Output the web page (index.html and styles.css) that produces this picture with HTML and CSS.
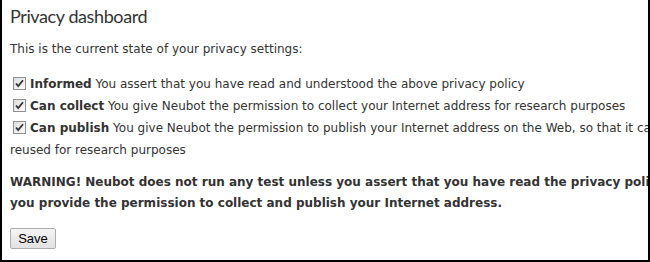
FILE: index.html
```html
<!DOCTYPE html>
<html>
<head>
<meta charset="utf-8">
<title>Privacy dashboard</title>
<link rel="stylesheet" href="styles.css">
</head>
<body>
<div class="frame">
  <div class="content">
    <h1 class="title">Privacy dashboard</h1>
    <p class="intro">This is the current state of your privacy settings:</p>
    <p class="settings">
      <span class="cb"><svg width="13" height="13" viewBox="0 0 13 13"><defs><linearGradient id="g" x1="0" y1="0" x2="1" y2="1"><stop offset="0" stop-color="#dcdcdc"/><stop offset="1" stop-color="#ffffff"/></linearGradient></defs><rect x="0.5" y="0.5" width="12" height="12" fill="url(#g)" stroke="#8e8f8f"/><path d="M3 6.5 L5.2 9 L10 3.2" fill="none" stroke="#333" stroke-width="1.8"/></svg></span><b>Informed</b> You assert that you have read and understood the above privacy policy<br>
      <span class="cb"><svg width="13" height="13" viewBox="0 0 13 13"><rect x="0.5" y="0.5" width="12" height="12" fill="url(#g)" stroke="#8e8f8f"/><path d="M3 6.5 L5.2 9 L10 3.2" fill="none" stroke="#333" stroke-width="1.8"/></svg></span><b>Can collect</b> You give Neubot the permission to collect your Internet address for research purposes<br>
      <span class="cb"><svg width="13" height="13" viewBox="0 0 13 13"><rect x="0.5" y="0.5" width="12" height="12" fill="url(#g)" stroke="#8e8f8f"/><path d="M3 6.5 L5.2 9 L10 3.2" fill="none" stroke="#333" stroke-width="1.8"/></svg></span><b>Can publish</b> You give Neubot the permission to publish your Internet address on the Web, so that it can be reused for research purposes
    </p>
    <p class="warning">WARNING! Neubot does not run any test unless you assert that you have read the privacy policy and you provide the permission to collect and publish your Internet address.</p>
    <button class="save" type="button">Save</button>
  </div>
</div>
</body>
</html>
```
FILE: styles.css
```css
html, body {
  margin: 0;
  padding: 0;
  background: #fff;
}
.frame {
  box-sizing: border-box;
  width: 650px;
  height: 262px;
  overflow: hidden;
  border-left: 2px solid #000;
  border-right: 2px solid #000;
  border-bottom: 2px solid #000;
}
.content {
  width: 700px;
  padding: 0 8px;
  color: #333;
  font-family: "DejaVu Sans", Verdana, sans-serif;
  font-size: 12px;
}
.title {
  font-family: Lato, "Open Sans", sans-serif;
  font-weight: 400;
  font-size: 18px;
  letter-spacing: -0.4px;
  line-height: 26px;
  margin: 3px 0 9px;
  color: #333;
}
.intro {
  line-height: 22px;
  margin: 0 0 13px;
}
.settings {
  line-height: 22px;
  margin: 0 0 11px;
}
.cb {
  display: inline-block;
  width: 13px;
  height: 13px;
  margin: 0 4px 0 3px;
  vertical-align: -2px;
}
.cb svg {
  display: block;
}
.warning {
  font-weight: bold;
  line-height: 21px;
  margin: 0 0 14px;
}
.save {
  font-family: "Liberation Sans", Arial, sans-serif;
  font-size: 13px;
  color: #000;
  width: 46px;
  height: 21px;
  padding: 0;
  border: 1px solid #adadad;
  border-radius: 2px;
  background: linear-gradient(#f4f4f4, #e2e2e2);
}
```
